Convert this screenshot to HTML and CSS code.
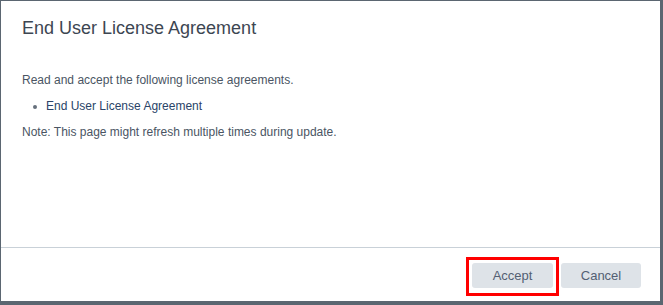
FILE: index.html
```html
<!DOCTYPE html>
<html>
    <head>
        <meta charset="UTF-8">
        <meta name="viewport" content="width=device-width, initial-scale=1.0">
        <title>End User License Agreement</title>
        <link rel="stylesheet" href="styles.css">
    </head>
    <body>
        <div class="dialog">
            <div class="dialog-header">
                <h1 class="dialog-title">End User License Agreement</h1>
            </div>
            <div class="dialog-body">
                <p>Read and accept the following license agreements.</p>
                <ul class="eula-list">
                    <li><a href="#">End User License Agreement</a></li>
                </ul>
                <p>Note: This page might refresh multiple times during update.</p>
            </div>
            <div class="dialog-footer">
                <button class="btn btn-accept">Accept</button>
                <button class="btn">Cancel</button>
            </div>
        </div>
    </body>
</html>
```

FILE: styles.css
```css
* {
    margin: 0;
    padding: 0;
    box-sizing: border-box;
}
body {
    font-family: "Liberation Sans", Arial, sans-serif;
    background-color: #5b6671;
    height: 305px;
    overflow: hidden;
}
.dialog {
    margin: 1px 3px 4px 1px;
    height: 300px;
    background-color: #fff;
    display: flex;
    flex-direction: column;
}
.dialog-header {
    padding: 16px 20px 0 21px;
}
.dialog-title {
    font-size: 18px;
    font-weight: normal;
    line-height: 22px;
    color: #3d4652;
}
.dialog-body {
    flex: 1;
    padding: 33px 20px 0 21px;
    font-size: 12px;
    line-height: 16px;
    color: #4a5563;
}
.dialog-body p {
    margin-bottom: 10px;
}
.eula-list {
    list-style: none;
    margin-bottom: 10px;
}
.eula-list li {
    position: relative;
    padding-left: 24px;
}
.eula-list li:before {
    content: "";
    position: absolute;
    left: 11px;
    top: 7px;
    width: 4px;
    height: 4px;
    border-radius: 50%;
    background-color: #66707c;
}
.eula-list a {
    color: #2a4468;
    text-decoration: none;
}
.dialog-footer {
    border-top: 1px solid #c9d1d8;
    height: 54px;
    padding: 15px 19px 0 0;
    display: flex;
    justify-content: flex-end;
    align-items: flex-start;
    gap: 8px;
}
.btn {
    font-family: "Liberation Sans", Arial, sans-serif;
    font-size: 13px;
    height: 25px;
    width: 80px;
    border: none;
    border-radius: 3px;
    background-color: #dee3e8;
    color: #536073;
}
.btn-accept {
    width: 81px;
    position: relative;
}
.btn-accept:after {
    content: "";
    position: absolute;
    top: -6px;
    left: -6px;
    right: -6px;
    bottom: -8px;
    border: 3px solid #ff0000;
}
```
